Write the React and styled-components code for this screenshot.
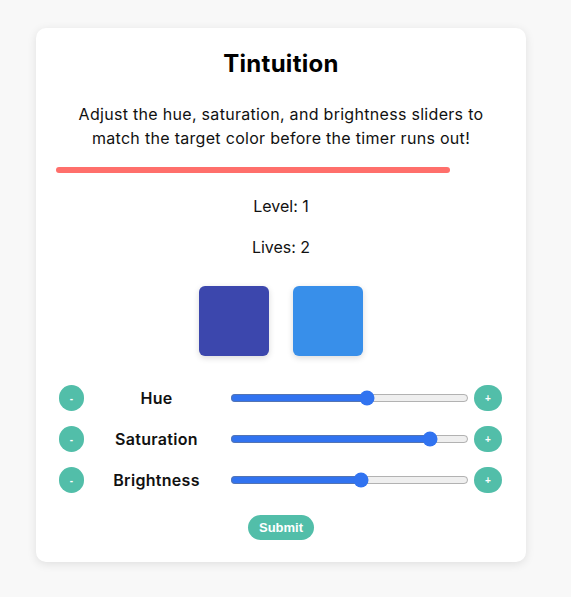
import React, { useState } from 'react';
import styled, { createGlobalStyle } from 'styled-components';

const GlobalStyle = createGlobalStyle`
  body {
    margin: 0;
    background: #f8f8f8;
    font-family: Inter, "Open Sans", sans-serif;
    color: #111;
  }
`;

const Page = styled.main`
  padding: 28px 0 34px 36px;
`;

const Card = styled.section`
  width: 490px;
  box-sizing: border-box;
  padding: 20px 20px 22px;
  background: #fff;
  border-radius: 10px;
  box-shadow: 0 2px 10px rgba(0, 0, 0, 0.1);
  display: flex;
  flex-direction: column;
  align-items: center;
`;

const Title = styled.h1`
  margin: 0;
  font-size: 24px;
  line-height: 32px;
  font-weight: 700;
  letter-spacing: 0.3px;
  color: #000;
`;

const Intro = styled.p`
  max-width: 430px;
  margin: 22px 0 0;
  font-size: 16px;
  line-height: 24px;
  letter-spacing: 0.3px;
  text-align: center;
`;

const Timer = styled.div`
  align-self: stretch;
  height: 6px;
  margin-top: 17px;
`;

const TimerFill = styled.div`
  height: 100%;
  background: #ff6f6b;
  border-radius: 3px;
`;

const Stat = styled.p`
  margin: ${(p) => p.$gap}px 0 0;
  font-size: 16px;
  line-height: 24px;
`;

const Swatches = styled.div`
  display: flex;
  gap: 24px;
  margin-top: 27px;
`;

const Swatch = styled.div`
  width: 70px;
  height: 70px;
  border-radius: 6px;
  background: ${(p) => p.$color};
  box-shadow: 0 2px 6px rgba(0, 0, 0, 0.15);
`;

const Controls = styled.div`
  align-self: stretch;
  display: flex;
  flex-direction: column;
  gap: 15px;
  margin-top: 29px;
`;

const Row = styled.div`
  display: flex;
  align-items: center;
  padding-left: 3px;
`;

const StepButton = styled.button`
  flex: none;
  width: ${(p) => (p.$wide ? 28 : 25)}px;
  height: 26px;
  padding: 0;
  border: none;
  border-radius: 13px;
  background: #52bea9;
  color: #fff;
  font-family: "Liberation Sans", Arial, sans-serif;
  font-size: 10px;
  font-weight: 700;
`;

const Label = styled.span`
  width: 145px;
  text-align: center;
  font-size: 16px;
  font-weight: 600;
  letter-spacing: 0.3px;
`;

const Slider = styled.input`
  width: 239px;
  margin: 0 5px 0 1px;
  accent-color: #3173f0;
`;

const Submit = styled.button`
  margin-top: 22px;
  height: 25px;
  padding: 0 11px;
  border: none;
  border-radius: 13px;
  background: #52bea9;
  color: #fff;
  font-family: "Liberation Sans", Arial, sans-serif;
  font-size: 13px;
  font-weight: 700;
`;

const sliders = [
  { key: 'hue', label: 'Hue', max: 360, value: 208 },
  { key: 'sat', label: 'Saturation', max: 100, value: 86 },
  { key: 'bri', label: 'Brightness', max: 100, value: 55 },
];

export default function App() {
  const [values, setValues] = useState(
    Object.fromEntries(sliders.map((s) => [s.key, s.value]))
  );
  const timeLeft = 0.876;

  const set = (key, max, v) =>
    setValues((prev) => ({ ...prev, [key]: Math.max(0, Math.min(max, v)) }));

  return (
    <>
      <GlobalStyle />
      <Page>
        <Card>
          <Title>Tintuition</Title>
          <Intro>
            Adjust the hue, saturation, and brightness sliders to match the target color
            before the timer runs out!
          </Intro>
          <Timer>
            <TimerFill style={{ width: `${timeLeft * 100}%` }} />
          </Timer>
          <Stat $gap={21}>Level: 1</Stat>
          <Stat $gap={17}>Lives: 2</Stat>
          <Swatches>
            <Swatch $color="#3c47ad" />
            <Swatch $color="#388fea" />
          </Swatches>
          <Controls>
            {sliders.map((s) => (
              <Row key={s.key}>
                <StepButton onClick={() => set(s.key, s.max, values[s.key] - 1)}>-</StepButton>
                <Label>{s.label}</Label>
                <Slider
                  type="range"
                  min="0"
                  max={s.max}
                  value={values[s.key]}
                  onChange={(e) => set(s.key, s.max, Number(e.target.value))}
                />
                <StepButton $wide onClick={() => set(s.key, s.max, values[s.key] + 1)}>+</StepButton>
              </Row>
            ))}
          </Controls>
          <Submit>Submit</Submit>
        </Card>
      </Page>
    </>
  );
}
